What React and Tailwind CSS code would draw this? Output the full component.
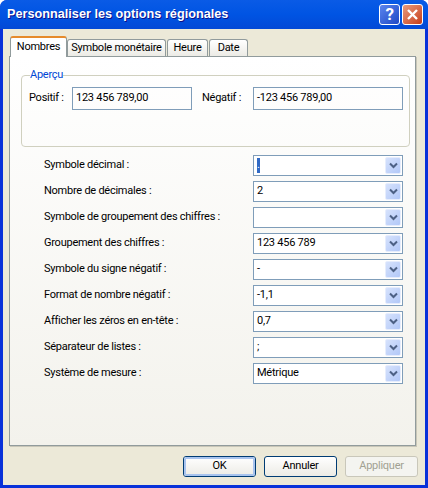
const tabs = [
  { label: 'Symbole monétaire', width: 'w-[99px]' },
  { label: 'Heure', width: 'w-[41px]' },
  { label: 'Date', width: 'w-[39px]' },
];

const rows = [
  ['Symbole décimal :', '.'],
  ['Nombre de décimales :', '2'],
  ['Symbole de groupement des chiffres :', ' '],
  ['Groupement des chiffres :', '123 456 789'],
  ['Symbole du signe négatif :', '-'],
  ['Format de nombre négatif :', '-1,1'],
  ['Afficher les zéros en en-tête :', '0,7'],
  ['Séparateur de listes :', ';'],
  ['Système de mesure :', 'Métrique'],
];

function ComboBox({ value, selected }) {
  return (
    <div className="flex h-[21px] w-[150px] items-center justify-between border border-[#7f9db9] bg-white pl-[3px] pr-px">
      {selected ? (
        <span className="h-[15px] w-[3px] bg-[#316ac5] text-white leading-[13px]">{value}</span>
      ) : (
        <span className="whitespace-pre text-black">{value}</span>
      )}
      <div className="flex h-[17px] w-[16px] items-center justify-center rounded-[2px] border border-[#e6edfd] bg-gradient-to-br from-[#d6e2fc] to-[#b2c8f8]">
        <svg width="9" height="7" viewBox="0 0 9 7" fill="none">
          <path d="M1 1.5 4.5 5 8 1.5" stroke="#4d6185" strokeWidth="2" />
        </svg>
      </div>
    </div>
  );
}

function Button({ children, isDefault, disabled }) {
  if (disabled) {
    return (
      <div className="flex h-[21px] w-[73px] items-center justify-center rounded-[3px] border border-[#c9c7ba] bg-[#f4f4f0] text-[#a1a192]">
        {children}
      </div>
    );
  }
  return (
    <div className="flex h-[21px] w-[73px] rounded-[3px] border border-[#003c74] bg-gradient-to-b from-white to-[#ecebe5] text-black">
      <div className={`flex flex-1 items-center justify-center rounded-[2px] ${isDefault ? 'border-2 border-[#a9c4ee]' : 'border-2 border-transparent'}`}>
        {children}
      </div>
    </div>
  );
}

export default function App() {
  return (
    <div className="flex h-[488px] w-[428px] flex-col overflow-hidden rounded-t-[7px] bg-[#0831d9] font-['Roboto',sans-serif] text-[11px] tracking-[-0.25px] text-black">
      {/* Title bar */}
      <div className="flex h-[29px] shrink-0 items-center justify-between bg-gradient-to-b from-[#0a5be6] via-[#0054e3] to-[#0349d6] pl-[7px] pr-[5px]">
        <span className="font-['Liberation_Sans',sans-serif] text-[12.7px] font-bold tracking-normal text-white [text-shadow:1px_1px_#0f1089]">
          Personnaliser les options régionales
        </span>
        <div className="flex gap-[2px]">
          <div className="flex h-[21px] w-[21px] items-center justify-center rounded-[3px] border border-white bg-gradient-to-br from-[#5b85ee] to-[#1f47c5] text-[17px] font-bold text-white">
            ?
          </div>
          <div className="flex h-[21px] w-[21px] items-center justify-center rounded-[3px] border border-white bg-gradient-to-br from-[#e89a7c] to-[#c63a12]">
            <svg width="13" height="13" viewBox="0 0 13 13" fill="none">
              <path d="M2 2 11 11M11 2 2 11" stroke="white" strokeWidth="2.4" />
            </svg>
          </div>
        </div>
      </div>

      {/* Dialog body */}
      <div className="mx-[3px] mb-[3px] flex flex-1 flex-col bg-[#ece9d8] px-[6px] pt-[7px]">
        <div className="flex items-end pl-px">
          <div className="z-10 -mb-px flex h-[21px] w-[57px] items-center justify-center rounded-t-[3px] border-x border-[#919b9c] border-t-2 border-t-[#e68b2c] bg-white">
            Nombres
          </div>
          {tabs.map((tab) => (
            <div key={tab.label} className={`mr-px flex h-[17px] ${tab.width} items-center justify-center whitespace-nowrap rounded-t-[3px] border-x border-t border-[#919b9c] bg-gradient-to-b from-white to-[#ecebe5]`}>
              {tab.label}
            </div>
          ))}
        </div>

        {/* Tab panel */}
        <div className="flex h-[390px] w-[407px] flex-col border border-[#919b9c] bg-gradient-to-b from-white to-[#f3f2ec] pl-[11px] pr-[5px] pt-[12px] shadow-[1px_1px_0_#c8c6b8]">
          <fieldset className="h-[78px] w-[389px] rounded-[4px] border border-[#d0d0bf]">
            <legend className="ml-[8px] leading-[12px] text-[#0046d5]">Aperçu</legend>
            <div className="flex items-center pl-[7px] pt-[6px]">
              <span className="w-[43px]">Positif :</span>
              <div className="flex h-[23px] w-[120px] items-start border border-[#7f9db9] pl-[3px] pt-[2px]">123 456 789,00</div>
              <span className="ml-[10px] w-[51px]">Négatif :</span>
              <div className="flex h-[23px] w-[150px] items-start border border-[#7f9db9] pl-[3px] pt-[2px]">-123 456 789,00</div>
            </div>
          </fieldset>

          <div className="mt-[8px] flex flex-col gap-[5px] pl-[23px]">
            {rows.map(([label, value], i) => (
              <div key={label} className="flex items-center">
                <span className="w-[209px]">{label}</span>
                <ComboBox value={value} selected={i === 0} />
              </div>
            ))}
          </div>
        </div>

        {/* Buttons */}
        <div className="mt-[10px] flex justify-end gap-[8px] pr-[1px]">
          <Button isDefault>OK</Button>
          <Button>Annuler</Button>
          <Button disabled>Appliquer</Button>
        </div>
      </div>
    </div>
  );
}
